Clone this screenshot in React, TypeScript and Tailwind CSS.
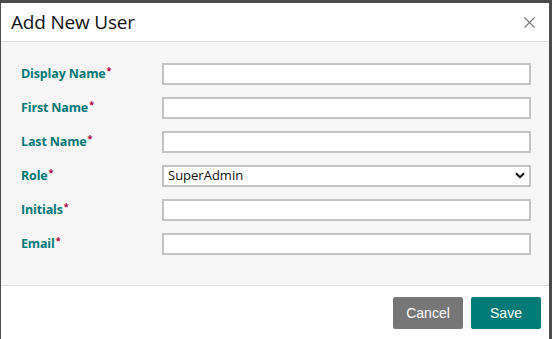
import React from 'react';

const fields = [
  { label: 'Display Name', type: 'text' },
  { label: 'First Name', type: 'text' },
  { label: 'Last Name', type: 'text' },
  { label: 'Role', type: 'select' },
  { label: 'Initials', type: 'text' },
  { label: 'Email', type: 'text' },
];

const App: React.FC = () => {
  return (
    <div className="w-[552px] h-[339px] bg-[#4b4b4b] pt-[3px] pl-[1px] pr-[3px] overflow-hidden font-['Open_Sans',sans-serif]">
      <div className="h-[336px] bg-white flex flex-col">
        {/* Header */}
        <div className="h-[39px] flex items-center justify-between pl-[10px] pr-[14px] border-b border-[#dcdcdc]">
          <h2 className="text-[19px] text-[#111] tracking-[-0.2px]">Add New User</h2>
          <button className="text-[#777]">
            <svg width="11" height="11" viewBox="0 0 11 11" fill="none" stroke="currentColor" strokeWidth="1.1">
              <path d="M0.5 0.5L10.5 10.5M10.5 0.5L0.5 10.5" />
            </svg>
          </button>
        </div>

        {/* Body */}
        <div className="h-[244px] bg-[#f6f6f6] border-b border-[#dcdcdc] pt-[21px] pl-[20px] pr-[18px]">
          <div className="flex flex-col gap-[13px]">
            {fields.map((f) => (
              <div key={f.label} className="flex items-center h-[21px]">
                <label className="w-[141px] pt-[2px] text-[12.5px] font-bold text-[#007878] tracking-[-0.15px]">
                  {f.label}
                  <sup className="text-[#b0003a] text-[9px] ml-[1px]">*</sup>
                </label>
                {f.type === 'select' ? (
                  <div className="w-[369px] h-[22px] bg-white border-2 border-[#c2c2c2] flex items-center justify-between pl-[4px] pr-[4px]">
                    <span className="text-[13px] text-[#111]">SuperAdmin</span>
                    <svg width="10" height="7" viewBox="0 0 10 7" fill="none" stroke="#111" strokeWidth="2">
                      <path d="M1 1.2L5 5.2L9 1.2" />
                    </svg>
                  </div>
                ) : (
                  <input
                    type="text"
                    className="w-[369px] h-[22px] bg-white border-2 border-[#c2c2c2] outline-none"
                  />
                )}
              </div>
            ))}
          </div>
        </div>

        {/* Footer */}
        <div className="flex justify-end gap-[8px] pt-[11px] pr-[8px] font-['Liberation_Sans',sans-serif]">
          <button className="w-[70px] h-[32px] bg-[#767676] text-white text-[14px] rounded-[2px]">Cancel</button>
          <button className="w-[70px] h-[32px] bg-[#007b78] text-white text-[14px] rounded-[2px]">Save</button>
        </div>
      </div>
    </div>
  );
};

export default App;
